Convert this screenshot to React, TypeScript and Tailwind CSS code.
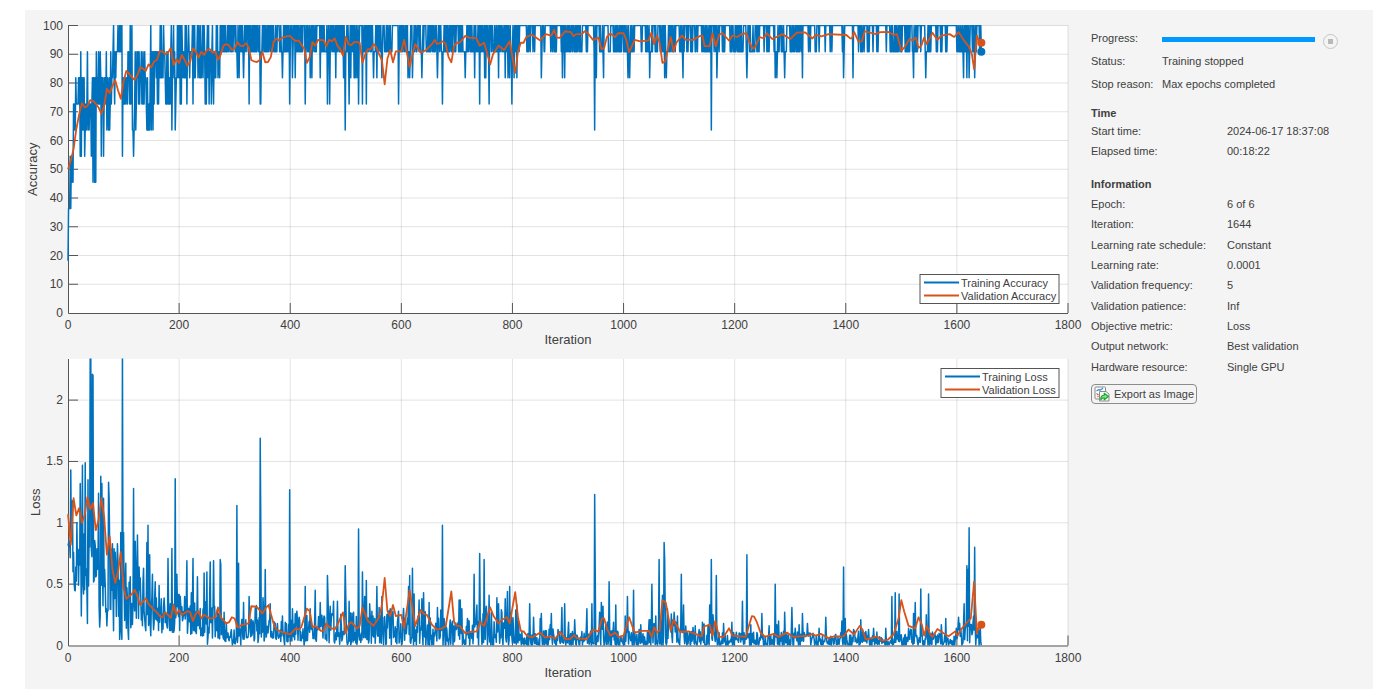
type Point = [number, number]

const LAST_ITERATION = 1644
const BLUE = '#0072bd'
const ORANGE = '#d95319'

const validationAccuracy: Point[] = [
  [0, 50], [5, 53], [10, 57], [15, 64], [20, 69], [25, 73], [30, 71.5], [35, 72], [40, 74], [45, 73.8], [50, 72.8], [55, 71.5],
  [60, 69.3], [65, 72], [70, 78], [75, 76.5], [80, 79], [85, 81], [90, 77.5], [95, 74.5], [100, 80.5], [105, 84.2], [110, 83.3],
  [115, 82], [120, 81], [125, 82.8], [130, 85.5], [135, 85], [140, 84.2], [145, 86.5], [150, 85.5], [155, 87.5], [160, 88],
  [165, 91], [170, 91], [175, 90], [180, 90.5], [185, 92.2], [190, 86.3], [195, 88.3], [200, 87], [205, 89.8], [210, 88],
  [215, 86], [220, 87.5], [225, 92], [230, 91], [235, 88.8], [240, 90.8], [245, 89.8], [250, 91.5], [255, 91.8], [260, 90.5],
  [265, 91], [270, 88], [275, 90], [280, 93], [285, 93.6], [290, 93], [295, 91.5], [300, 92], [305, 94.2], [310, 93],
  [315, 92.8], [320, 93.8], [325, 92.5], [330, 88], [335, 87.5], [340, 87.3], [345, 88], [350, 90.8], [355, 87.2], [360, 87.3],
  [365, 89], [370, 94.3], [375, 95.5], [380, 94.8], [385, 95.7], [390, 96], [395, 96.3], [400, 96.3], [405, 95.3], [410, 94.6],
  [415, 94.8], [420, 93.3], [425, 92], [430, 87], [435, 89], [440, 94.2], [445, 93], [450, 95], [460, 94.9], [465, 92.8],
  [470, 95], [475, 94.5], [480, 95.5], [485, 93], [490, 91.8], [495, 89.5], [500, 96], [505, 93.5], [510, 93.2], [515, 94.2],
  [520, 94.2], [525, 94], [530, 87], [535, 90], [540, 91.8], [545, 91.8], [550, 93.5], [555, 92.5], [560, 90], [565, 88],
  [570, 79.5], [575, 88.5], [580, 91.5], [585, 87.2], [590, 91], [600, 91], [605, 95], [610, 90.5], [615, 85.5], [620, 90],
  [625, 93.5], [635, 90.5], [645, 91.5], [655, 93.5], [660, 95], [665, 93.5], [675, 94.5], [680, 93.5], [685, 89], [690, 87.2],
  [695, 93], [700, 94], [705, 94], [715, 96.4], [722, 95.8], [735, 95.6], [741, 93], [749, 94], [760, 86.5], [765, 90],
  [775, 93], [785, 91.5], [795, 94.5], [800, 89], [805, 83.5], [810, 91], [815, 94], [820, 94], [825, 96], [835, 96.8],
  [850, 94.8], [860, 97], [870, 96.5], [875, 98.5], [880, 95.8], [885, 95.7], [895, 98], [905, 97.7], [910, 96.3], [915, 97],
  [925, 97], [930, 98], [935, 97.5], [945, 95], [955, 95.8], [960, 91.8], [965, 92.2], [970, 96], [976, 97.2], [985, 96],
  [990, 97.3], [1000, 97.3], [1005, 95], [1010, 90.7], [1020, 95], [1030, 94.5], [1045, 94.8], [1050, 97.5], [1055, 93.5],
  [1060, 96.5], [1065, 94], [1070, 87], [1075, 87.5], [1080, 92], [1085, 96], [1090, 91], [1095, 94], [1105, 96.5], [1112, 95],
  [1125, 95], [1137, 96.3], [1142, 96.5], [1146, 92.8], [1155, 92.8], [1160, 97.3], [1166, 92.8], [1172, 96.8], [1178, 97.4],
  [1190, 94.7], [1196, 96.5], [1205, 96], [1212, 97], [1221, 97.3], [1226, 94.5], [1232, 92], [1236, 92.2], [1245, 96],
  [1252, 95.5], [1258, 97.3], [1268, 95.3], [1286, 97], [1300, 95.3], [1312, 97.5], [1327, 97.6], [1340, 95.5], [1346, 96.7],
  [1356, 96.2], [1369, 97], [1401, 96.7], [1408, 95.5], [1411, 95.5], [1415, 97.8], [1423, 94.4], [1429, 94.5], [1434, 98],
  [1454, 97], [1462, 97.7], [1476, 97.8], [1486, 96.7], [1492, 97], [1500, 91.3], [1506, 92.5], [1515, 95.3], [1520, 94.8],
  [1526, 95.8], [1531, 92.2], [1536, 93], [1541, 95.8], [1546, 93.5], [1556, 97.5], [1565, 95], [1572, 96.5], [1587, 97],
  [1595, 96], [1603, 97.7], [1612, 95], [1622, 92.5], [1627, 90], [1631, 84.8], [1636, 96.5], [1640, 94.5], [1644, 94],
]

const validationLoss: Point[] = [
  [0, 1.07], [5, 0.82], [10, 1.2], [15, 1.06], [20, 1.12], [25, 1], [30, 1.06], [35, 1.21], [40, 1.11], [45, 1.16], [50, 0.94],
  [55, 1.02], [60, 1.2], [65, 1.05], [70, 0.74], [75, 0.89], [80, 0.62], [85, 0.51], [90, 0.6], [95, 0.76], [100, 0.47],
  [105, 0.38], [115, 0.42], [120, 0.455], [125, 0.4], [130, 0.33], [140, 0.385], [145, 0.34], [155, 0.29], [160, 0.27],
  [165, 0.24], [170, 0.23], [175, 0.27], [180, 0.25], [185, 0.225], [190, 0.33], [195, 0.25], [200, 0.29], [205, 0.25],
  [215, 0.28], [220, 0.27], [225, 0.2], [230, 0.26], [235, 0.28], [240, 0.22], [245, 0.25], [255, 0.22], [265, 0.23],
  [270, 0.31], [275, 0.23], [285, 0.18], [290, 0.19], [295, 0.23], [300, 0.22], [305, 0.15], [315, 0.17], [325, 0.18],
  [330, 0.32], [340, 0.315], [350, 0.26], [355, 0.3], [361, 0.33], [365, 0.26], [370, 0.18], [375, 0.13], [385, 0.11],
  [400, 0.09], [405, 0.115], [410, 0.14], [415, 0.13], [420, 0.15], [430, 0.3], [435, 0.28], [440, 0.15], [445, 0.16],
  [455, 0.12], [460, 0.12], [465, 0.18], [470, 0.15], [475, 0.14], [480, 0.13], [485, 0.17], [495, 0.27], [500, 0.1],
  [505, 0.17], [510, 0.19], [520, 0.14], [525, 0.16], [530, 0.31], [540, 0.2], [550, 0.16], [560, 0.23], [565, 0.33],
  [570, 0.55], [575, 0.28], [580, 0.24], [585, 0.33], [590, 0.24], [600, 0.25], [605, 0.14], [615, 0.45], [625, 0.16],
  [635, 0.29], [640, 0.26], [646, 0.25], [655, 0.17], [664, 0.13], [674, 0.14], [680, 0.16], [690, 0.44], [695, 0.19],
  [700, 0.16], [705, 0.16], [715, 0.1], [724, 0.11], [736, 0.115], [742, 0.19], [749, 0.16], [760, 0.31], [766, 0.24],
  [775, 0.18], [781, 0.21], [790, 0.23], [795, 0.18], [805, 0.435], [810, 0.23], [815, 0.12], [820, 0.115], [826, 0.08],
  [835, 0.065], [850, 0.105], [859, 0.065], [868, 0.075], [877, 0.055], [886, 0.11], [896, 0.05], [904, 0.055], [911, 0.085],
  [916, 0.06], [934, 0.05], [945, 0.13], [955, 0.115], [961, 0.22], [965, 0.22], [970, 0.14], [976, 0.08], [985, 0.105],
  [991, 0.07], [1000, 0.08], [1010, 0.23], [1020, 0.105], [1033, 0.12], [1046, 0.12], [1051, 0.07], [1055, 0.15],
  [1060, 0.105], [1065, 0.12], [1070, 0.37], [1076, 0.35], [1085, 0.12], [1090, 0.21], [1102, 0.11], [1117, 0.115],
  [1141, 0.075], [1145, 0.155], [1155, 0.17], [1160, 0.08], [1165, 0.2], [1172, 0.07], [1180, 0.07], [1190, 0.14],
  [1196, 0.08], [1210, 0.075], [1220, 0.07], [1225, 0.15], [1231, 0.24], [1235, 0.235], [1240, 0.19], [1247, 0.1],
  [1255, 0.07], [1270, 0.095], [1279, 0.07], [1294, 0.105], [1306, 0.07], [1333, 0.08], [1340, 0.095], [1346, 0.08],
  [1355, 0.095], [1369, 0.06], [1379, 0.075], [1396, 0.075], [1405, 0.13], [1415, 0.09], [1425, 0.16], [1430, 0.13],
  [1436, 0.05], [1447, 0.06], [1456, 0.075], [1465, 0.04], [1475, 0.045], [1486, 0.09], [1495, 0.22], [1500, 0.37],
  [1505, 0.28], [1513, 0.16], [1525, 0.14], [1531, 0.23], [1537, 0.17], [1541, 0.08], [1546, 0.16], [1552, 0.09],
  [1556, 0.07], [1565, 0.135], [1576, 0.1], [1585, 0.075], [1597, 0.115], [1601, 0.08], [1609, 0.14], [1625, 0.22],
  [1631, 0.52], [1636, 0.1], [1640, 0.16], [1644, 0.17],
]

// batch size is 11, so a level is the number of wrong samples: [from, to, fewest, most]
const accuracyRanges: [number, number, number, number][] = [
  [1, 6, 5, 7], [7, 9, 4, 6], [10, 13, 3, 4], [14, 21, 2, 3], [22, 24, 1, 5], [25, 31, 2, 5], [32, 39, 3, 4], [40, 42, 3, 5],
  [43, 50, 2, 6], [51, 61, 1, 3], [62, 68, 2, 3], [69, 75, 2, 4], [76, 79, 1, 3], [80, 88, 1, 3], [89, 97, 0, 1],
  [98, 105, 2, 3], [106, 115, 0, 3], [116, 122, 1, 4], [123, 140, 1, 3], [141, 148, 2, 4], [149, 154, 1, 4], [155, 164, 1, 3],
  [165, 175, 0, 2], [176, 184, 1, 3], [185, 194, 0, 3], [195, 204, 0, 2], [205, 211, 0, 2], [212, 222, 0, 2], [223, 242, 0, 2],
  [243, 249, 0, 3], [250, 262, 0, 2], [263, 276, 0, 2], [277, 297, 0, 1], [301, 322, 0, 1], [329, 352, 0, 1], [354, 378, 0, 1],
  [381, 424, 0, 1], [428, 449, 0, 1], [453, 488, 0, 1], [489, 514, 0, 1], [518, 583, 0, 1], [594, 628, 0, 1], [631, 698, 0, 1],
  [702, 757, 0, 1], [761, 775, 0, 1], [778, 812, 0, 1], [824, 833, 0, 1], [837, 840, 0, 1], [850, 858, 0, 1], [868, 880, 0, 1],
  [888, 925, 0, 1], [932, 936, 0, 1], [946, 951, 0, 1], [957, 966, 0, 1], [973, 976, 0, 1], [980, 1000, 0, 1],
  [1001, 1022, 0, 1], [1031, 1035, 0, 1], [1040, 1062, 0, 1], [1066, 1072, 0, 1], [1075, 1095, 0, 1], [1101, 1110, 0, 1],
  [1114, 1117, 0, 1], [1121, 1125, 0, 1], [1129, 1133, 0, 1], [1141, 1172, 0, 1], [1178, 1182, 0, 1], [1192, 1216, 0, 1],
  [1221, 1244, 0, 1], [1249, 1253, 0, 1], [1258, 1262, 0, 1], [1269, 1293, 0, 1], [1300, 1323, 0, 1], [1333, 1336, 0, 1],
  [1345, 1347, 0, 1], [1352, 1354, 0, 1], [1363, 1365, 0, 1], [1372, 1375, 0, 1], [1393, 1400, 0, 1], [1412, 1413, 0, 1],
  [1423, 1434, 0, 1], [1439, 1442, 0, 1], [1448, 1450, 0, 1], [1455, 1458, 0, 1], [1472, 1474, 0, 1], [1480, 1515, 0, 1],
  [1519, 1530, 0, 1], [1534, 1538, 0, 1], [1543, 1554, 0, 1], [1563, 1566, 0, 1], [1570, 1574, 0, 1], [1580, 1583, 0, 1],
  [1600, 1617, 0, 1], [1620, 1623, 0, 1], [1627, 1635, 0, 1], [1640, 1643, 0, 1],
]

const accuracyMarks: Record<number, number> = {
  0: 9, 1: 7, 23: 1, 35: 1, 60: 5, 64: 5, 69: 1, 73: 4, 82: 0, 98: 5, 118: 5, 149: 0, 153: 4, 187: 4, 193: 4, 202: 3, 204: 3,
  214: 3, 225: 3, 254: 3, 258: 3, 262: 3, 305: 2, 308: 2, 316: 2, 326: 3, 346: 3, 347: 3, 386: 2, 399: 3, 404: 2, 409: 2,
  427: 3, 436: 2, 439: 2, 454: 2, 467: 3, 471: 3, 482: 2, 496: 2, 499: 4, 506: 3, 509: 2, 515: 2, 517: 2, 520: 2, 523: 3,
  530: 3, 537: 3, 550: 2, 556: 2, 565: 2, 595: 3, 612: 2, 615: 2, 620: 2, 637: 2, 665: 2, 674: 3, 715: 2, 732: 2, 741: 3,
  750: 2, 752: 2, 758: 3, 775: 2, 787: 2, 792: 2, 795: 2, 799: 3, 803: 2, 808: 2, 852: 2, 890: 2, 894: 2, 948: 4, 951: 2,
  964: 2, 1008: 2, 1011: 2, 1047: 2, 1074: 2, 1077: 2, 1107: 2, 1158: 4, 1168: 2, 1222: 2, 1273: 2, 1276: 2, 1290: 2,
  1322: 2, 1396: 2, 1413: 2, 1522: 2, 1544: 2, 1612: 2, 1618: 2, 1622: 2, 1632: 2, 1644: 1,
}

// [iteration, floor, ceiling] of the everyday noise
const lossEnvelope: [number, number, number][] = [
  [0, 0.75, 1.1], [8, 0.65, 0.9], [14, 0.35, 0.8], [24, 0.3, 0.9], [30, 0.45, 1.2], [48, 0.45, 1.1], [56, 0.2, 0.9],
  [75, 0.3, 0.9], [90, 0.1, 0.7], [108, 0.12, 0.5], [120, 0.18, 0.6], [148, 0.14, 0.55], [165, 0.1, 0.4], [200, 0.1, 0.42],
  [235, 0.08, 0.36], [250, 0.06, 0.46], [270, 0.06, 0.36], [285, 0.03, 0.19], [305, 0.01, 0.16], [320, 0.06, 0.28],
  [345, 0.02, 0.36], [368, 0.06, 0.2], [390, 0.02, 0.2], [415, 0.04, 0.28], [460, 0.03, 0.25], [500, 0, 0.28], [530, 0.01, 0.32],
  [600, 0, 0.3], [625, 0, 0.31], [680, 0, 0.22], [720, 0, 0.22], [760, 0, 0.31], [808, 0, 0.28], [818, 0, 0.09], [880, 0, 0.15],
  [920, 0, 0.1], [945, 0, 0.2], [965, 0, 0.26], [978, 0, 0.14], [1040, 0, 0.13], [1070, 0, 0.33], [1095, 0, 0.22], [1120, 0, 0.14],
  [1150, 0, 0.22], [1180, 0, 0.1], [1240, 0, 0.13], [1260, 0, 0.07], [1300, 0, 0.14], [1335, 0, 0.12], [1350, 0, 0.08],
  [1400, 0, 0.12], [1435, 0, 0.12], [1470, 0, 0.06], [1490, 0, 0.14], [1530, 0, 0.14], [1590, 0, 0.08], [1615, 0, 0.26],
  [1644, 0, 0.14],
]

const lossMarks: Record<number, number> = {
  5: 1.43, 8: 1.18, 16: 1, 22: 1.32, 24: 0.24, 26: 1.47, 31: 1.49, 35: 0.18, 36: 1.35, 40: 2.45, 41: 2.4, 44: 2.21, 45: 2.2,
  55: 1.24, 57: 0.15, 59: 1.38, 61: 1.32, 64: 1.2, 70: 0.16, 73: 1.33, 74: 1.2, 80: 0.83, 82: 0.12, 85: 0.76, 89: 0.83,
  93: 0.05, 95: 0.92, 97: 0.05, 98: 2.45, 100: 0.92, 104: 0.67, 109: 0.05, 112: 0.56, 118: 1.28, 121: 0.85, 125: 0.9,
  128: 0.64, 136: 0.63, 140: 0.12, 142: 0.84, 144: 0.98, 147: 0.74, 149: 0.08, 152: 0.58, 157: 0.52, 164: 0.49, 180: 0.71,
  187: 0.79, 193: 1.36, 196: 0.58, 214: 0.69, 222: 0.43, 225: 0.71, 233: 0.56, 245: 0.59, 250: 0.6, 251: 0.01, 256: 0.68,
  262: 0.69, 274: 0.7, 275: 0.66, 281: 0.27, 296: 0, 304: 1.14, 307: 0.67, 311: 0, 316: 0.35, 326: 0.4, 346: 1.69, 347: 1,
  351: 0.39, 355: 0.62, 364: 0.34, 386: 0.24, 390: 0, 399: 1.27, 404: 0.3, 412: 0.28, 425: 0, 427: 0.48, 436: 0.3,
  445: 0.45, 454: 0.35, 467: 0.57, 468: 0.4, 472: 0.32, 478: 0.36, 485: 0.36, 499: 0.65, 500: 0.4, 506: 0.36, 523: 0.95,
  530: 0.6, 534: 0.4, 537: 0.53, 543: 0.34, 556: 0.48, 565: 0.4, 580: 0.3, 595: 0.28, 613: 0.48, 615: 0.57, 620: 0.63,
  623: 0.42, 632: 0.37, 637: 0.38, 640: 0.43, 650: 0.35, 665: 0.31, 671: 0.29, 674: 0.98, 704: 0.37, 706: 0.37, 709: 0.3,
  722: 0.2, 731: 0.58, 736: 0.33, 741: 0.75, 749: 0.7, 753: 0.32, 758: 0.41, 772: 0.39, 775: 0.34, 781: 0.27, 787: 0.38,
  791: 0.44, 795: 0.48, 806: 0.29, 808: 0.33, 831: 0.34, 838: 0.23, 850: 0.22, 852: 0.26, 868: 0.17, 870: 0.26, 889: 0.31,
  894: 0.34, 901: 0.19, 912: 0.21, 934: 0.3, 943: 0.34, 948: 1.23, 949: 0.6, 957: 0.27, 960: 0.35, 963: 0.32, 974: 0.52,
  982: 0.19, 986: 0.33, 1003: 0.24, 1007: 0.4, 1018: 0.45, 1031: 0.17, 1046: 0.21, 1048: 0.21, 1051: 0.5, 1064: 0.7,
  1070: 0.41, 1073: 0.84, 1074: 0.7, 1079: 0.3, 1091: 0.27, 1097: 0.24, 1104: 0.58, 1108: 0.33, 1129: 0.16, 1155: 0.33,
  1158: 0.7, 1161: 0.25, 1167: 0.57, 1180: 0.18, 1195: 0.19, 1214: 0.36, 1222: 0.74, 1229: 0.17, 1249: 0.26, 1262: 0.16,
  1273: 0.5, 1276: 0.17, 1279: 0.2, 1290: 0.27, 1303: 0.31, 1309: 0.14, 1316: 0.17, 1322: 0.26, 1331: 0.18, 1352: 0.14,
  1364: 0.23, 1393: 0.2, 1396: 0.64, 1399: 0.22, 1414: 0.13, 1427: 0.21, 1441: 0.13, 1450: 0.14, 1456: 0.11, 1472: 0.14,
  1483: 0.4, 1489: 0.43, 1496: 0.42, 1513: 0.14, 1522: 0.26, 1525: 0.35, 1535: 0.46, 1545: 0.25, 1549: 0.42, 1572: 0.17,
  1580: 0.22, 1603: 0.23, 1613: 0.34, 1618: 0.65, 1620: 0.62, 1622: 0.96, 1630: 0.24, 1632: 0.8, 1642: 0.17, 1644: 0,
}

function createRandom(seed: number) {
  let state = seed
  return () => {
    state = (state + 0x6d2b79f5) | 0
    let t = Math.imul(state ^ (state >>> 15), 1 | state)
    t = (t + Math.imul(t ^ (t >>> 7), 61 | t)) ^ t
    return ((t ^ (t >>> 14)) >>> 0) / 4294967296
  }
}

// mini batches jump between the best and the worst level most of the time
function getTrainingAccuracy() {
  const random = createRandom(11)
  const points: Point[] = []
  let best = false
  for (let i = 0; i <= LAST_ITERATION; i++) {
    const range = accuracyRanges.find(([from, to]) => i >= from && i <= to)
    let wrong = 0
    if (range) {
      const [, , low, high] = range
      if (random() < 0.72) best = !best
      wrong = best ? low : high
      if (high - low > 1 && random() < 0.3) wrong = low + 1 + Math.floor(random() * (high - low - 1))
    }
    wrong = accuracyMarks[i] ?? wrong
    points.push([i, 100 - (wrong * 100) / 11])
  }
  return points
}

function getTrainingLoss() {
  const random = createRandom(29)
  const points: Point[] = []
  for (let i = 0; i <= LAST_ITERATION; i++) {
    const next = Math.max(1, lossEnvelope.findIndex(([at]) => at >= i))
    const [x0, floor0, top0] = lossEnvelope[next - 1]
    const [x1, floor1, top1] = lossEnvelope[next]
    const t = (i - x0) / (x1 - x0)
    const floor = floor0 + (floor1 - floor0) * t
    const top = top0 + (top1 - top0) * t
    const power = random() < 0.5 ? 0.9 : 2.4
    points.push([i, lossMarks[i] ?? floor + (top - floor) * random() ** power])
  }
  return points
}

const trainingAccuracy = getTrainingAccuracy()
const trainingLoss = getTrainingLoss()

type ChartProps = {
  name: string
  nameX: number
  height: number
  top: number
  bottom: number
  max: number
  ticks: number[]
  training: Point[]
  validation: Point[]
  legendWidth: number
  legendY: number
  showTrainingEnd?: boolean
}

const LEFT = 43
const RIGHT = 1043
const xTicks = [0, 200, 400, 600, 800, 1000, 1200, 1400, 1600, 1800]

function Chart({ name, nameX, height, top, bottom, max, ticks, training, validation, legendWidth, legendY, showTrainingEnd }: ChartProps) {
  const x = (value: number) => LEFT + (value / 1800) * (RIGHT - LEFT)
  const y = (value: number) => bottom - (value / max) * (bottom - top)
  const line = (points: Point[]) => points.map(([i, value]) => `${x(i).toFixed(2)},${y(value).toFixed(2)}`).join(' ')
  const clipId = `plot-${name}`
  const legendX = 1034 - legendWidth
  const middle = (top + bottom) / 2
  const lastTraining = training[training.length - 1]
  const lastValidation = validation[validation.length - 1]

  return (
    <svg className="block w-full" viewBox={`0 0 1066 ${height}`} role="img" aria-label={`${name} by iteration`} fontFamily="'Liberation Sans', Arial, sans-serif" fill="#404040">
      <clipPath id={clipId}>
        <rect x={LEFT - 1} y={top - 0.5} width={RIGHT - LEFT + 2} height={bottom - top + 0.5} />
      </clipPath>
      <rect x={LEFT} y={top} width={RIGHT - LEFT} height={bottom - top} fill="#fff" />

      <g stroke="#262626" strokeOpacity="0.13">
        {xTicks.slice(1).map((tick) => <line key={tick} x1={x(tick)} x2={x(tick)} y1={top} y2={bottom} />)}
        {ticks.slice(1).map((tick) => <line key={tick} x1={LEFT} x2={RIGHT} y1={y(tick)} y2={y(tick)} />)}
      </g>

      <g stroke="#555">
        <path d={`M${LEFT + 0.5} ${top}V${bottom + 0.5}H${RIGHT}`} fill="none" />
        {xTicks.slice(1).map((tick) => <line key={tick} x1={x(tick)} x2={x(tick)} y1={bottom - 10} y2={bottom} />)}
        {ticks.slice(1).map((tick) => <line key={tick} x1={LEFT} x2={LEFT + 10} y1={y(tick)} y2={y(tick)} />)}
      </g>

      <g clipPath={`url(#${clipId})`} fill="none" strokeLinejoin="round">
        <polyline points={line(training)} stroke={BLUE} strokeWidth="1.5" />
        <polyline points={line(validation)} stroke={ORANGE} strokeWidth="1.8" />
      </g>
      {showTrainingEnd && <circle cx={x(lastTraining[0])} cy={y(lastTraining[1])} r="4" fill={BLUE} />}
      <circle cx={x(lastValidation[0])} cy={y(lastValidation[1])} r="4" fill={ORANGE} />

      <g fontSize="12" textAnchor="end">
        {ticks.map((tick) => <text key={tick} x={LEFT - 5} y={y(tick) + 4}>{tick}</text>)}
      </g>
      <g fontSize="12" textAnchor="middle">
        {xTicks.map((tick) => <text key={tick} x={x(tick)} y={bottom + 16}>{tick}</text>)}
      </g>
      <text x={(LEFT + RIGHT) / 2} y={bottom + 31} fontSize="13" textAnchor="middle">Iteration</text>
      <text transform={`translate(${nameX} ${middle}) rotate(-90)`} fontSize="13" textAnchor="middle">{name}</text>

      <g fontSize="11">
        <rect x={legendX} y={legendY} width={legendWidth} height="29" fill="#fff" stroke="#555" />
        <line x1={legendX + 4} x2={legendX + 39} y1={legendY + 8} y2={legendY + 8} stroke={BLUE} strokeWidth="1.8" />
        <line x1={legendX + 4} x2={legendX + 39} y1={legendY + 21} y2={legendY + 21} stroke={ORANGE} strokeWidth="1.8" />
        <text x={legendX + 41} y={legendY + 12}>Training {name}</text>
        <text x={legendX + 41} y={legendY + 25}>Validation {name}</text>
      </g>
    </svg>
  )
}

const timeRows = [
  ['Start time:', '2024-06-17 18:37:08'],
  ['Elapsed time:', '00:18:22'],
]

const infoRows = [
  ['Epoch:', '6 of 6'],
  ['Iteration:', '1644'],
  ['Learning rate schedule:', 'Constant'],
  ['Learning rate:', '0.0001'],
  ['Validation frequency:', '5'],
  ['Validation patience:', 'Inf'],
  ['Objective metric:', 'Loss'],
  ['Output network:', 'Best validation'],
  ['Hardware resource:', 'Single GPU'],
]

function Row({ label, value }: { label: string; value: string }) {
  return (
    <div className="flex min-h-5 items-center">
      <dt className="w-[136px] shrink-0">{label}</dt>
      <dd>{value}</dd>
    </div>
  )
}

function ExportIcon() {
  return (
    <svg className="h-4 w-4 shrink-0" viewBox="0 0 16 16" fill="none" aria-hidden="true">
      <rect x="1" y="1" width="10.5" height="12" rx="1" fill="#fff" stroke="#8a8a8a" />
      <path d="M2.5 5l2.5-1.5 1 .8 3-2" stroke="#2a8fd8" strokeWidth="1.3" />
      <path d="M2.5 7.5l2 1.500M3.5 11l1-1" stroke="#e0603a" strokeWidth="1.3" />
      <path d="M5.5 5.5h6.5l3 2.5v7h-9.500z" fill="#f8f8f8" stroke="#8a8a8a" />
      <path d="M6.8 13.8c-.2-3 1-4.600 3.400-4.600v-2l4.200 3.300-4.200 3.300v-2c-1.500 0-2.400.6-3.400 2z" fill="#8fe08f" stroke="#12a52c" strokeWidth="1.1" strokeLinejoin="round" />
    </svg>
  )
}

function Sidebar() {
  return (
    <aside className="w-[282px] shrink-0 pt-4">
      <div className="flex h-[23px] items-center">
        <span id="progress-label" className="w-[71px]">Progress:</span>
        <div role="progressbar" aria-labelledby="progress-label" aria-valuenow={100} aria-valuemin={0} aria-valuemax={100} className="mt-1 h-[5px] w-[153px] bg-[#0099ff]"></div>
        <button type="button" aria-label="Stop training" className="ml-2 mt-2 flex h-[15px] w-[15px] items-center justify-center rounded-full border border-[#c4c4c4]">
          <span className="h-[5px] w-[5px] bg-[#b8b8b8]"></span>
        </button>
      </div>
      <dl>
        <div className="flex h-[23px] items-center">
          <dt className="w-[71px]">Status:</dt>
          <dd>Training stopped</dd>
        </div>
        <div className="flex h-[23px] items-center">
          <dt className="w-[71px]">Stop reason:</dt>
          <dd>Max epochs completed</dd>
        </div>
      </dl>

      <h2 className="mt-2.5 font-bold">Time</h2>
      <dl>
        {timeRows.map(([label, value]) => <Row key={label} label={label} value={value} />)}
      </dl>

      <h2 className="mt-[15px] font-bold">Information</h2>
      <dl className="mt-0.5 grid min-h-[183px] auto-rows-fr">
        {infoRows.map(([label, value]) => <Row key={label} label={label} value={value} />)}
      </dl>

      <button type="button" className="mt-[7px] flex h-5 w-[106px] items-center gap-1 rounded-[4px] border border-[#8c8c8c] pl-[2px]">
        <ExportIcon />
        Export as Image
      </button>
    </aside>
  )
}

export default function App() {
  return (
    <main className="mb-[11px] ml-[25px] mr-[17px] mt-[10px] flex bg-[#f4f4f4] font-['Liberation_Sans',Arial,sans-serif] text-[11px] leading-4 text-[#404040]">
      <section className="min-w-0 flex-1">
        <Chart
          name="Accuracy"
          nameX={12}
          height={340}
          top={15.5}
          bottom={303}
          max={100}
          ticks={[0, 10, 20, 30, 40, 50, 60, 70, 80, 90, 100]}
          training={trainingAccuracy}
          validation={validationAccuracy}
          legendWidth={139}
          legendY={264.5}
          showTrainingEnd
        />
        <Chart
          name="Loss"
          nameX={15}
          height={339}
          top={9}
          bottom={295.5}
          max={2.335}
          ticks={[0, 0.5, 1, 1.5, 2]}
          training={trainingLoss}
          validation={validationLoss}
          legendWidth={118}
          legendY={18.5}
        />
      </section>
      <Sidebar />
    </main>
  )
}
